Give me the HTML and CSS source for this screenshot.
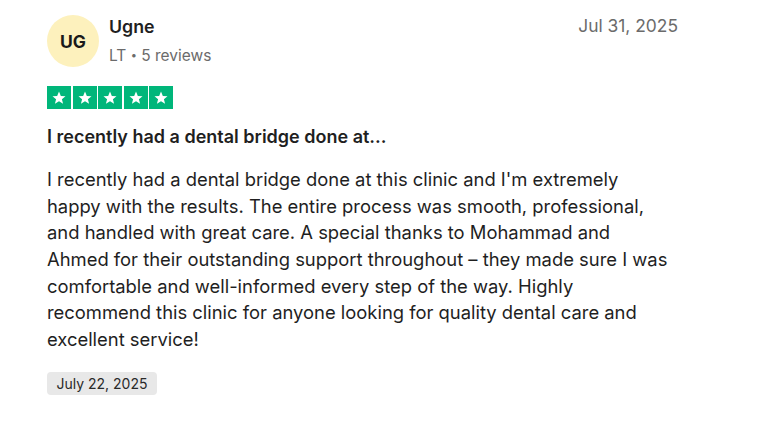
FILE: index.html
```html
<!DOCTYPE html>
<html>
<head>
<meta charset="utf-8">
<link rel="stylesheet" href="styles.css">
</head>
<body>
<article class="review">
  <header class="head">
    <div class="avatar">UG</div>
    <div class="who">
      <div class="name">Ugne</div>
      <div class="meta">LT <span class="dot">•</span> 5 reviews</div>
    </div>
    <time class="posted">Jul 31, 2025</time>
  </header>
  <div class="stars">
    <span class="star"><svg viewBox="0 0 24 24"><path d="M12 4.2l2.2 5.3 5.6.4-4.3 3.6 1.4 5.5L12 16l-4.9 3 1.4-5.5-4.3-3.6 5.6-.4z"/></svg></span>
    <span class="star"><svg viewBox="0 0 24 24"><path d="M12 4.2l2.2 5.3 5.6.4-4.3 3.6 1.4 5.5L12 16l-4.9 3 1.4-5.5-4.3-3.6 5.6-.4z"/></svg></span>
    <span class="star"><svg viewBox="0 0 24 24"><path d="M12 4.2l2.2 5.3 5.6.4-4.3 3.6 1.4 5.5L12 16l-4.9 3 1.4-5.5-4.3-3.6 5.6-.4z"/></svg></span>
    <span class="star"><svg viewBox="0 0 24 24"><path d="M12 4.2l2.2 5.3 5.6.4-4.3 3.6 1.4 5.5L12 16l-4.9 3 1.4-5.5-4.3-3.6 5.6-.4z"/></svg></span>
    <span class="star"><svg viewBox="0 0 24 24"><path d="M12 4.2l2.2 5.3 5.6.4-4.3 3.6 1.4 5.5L12 16l-4.9 3 1.4-5.5-4.3-3.6 5.6-.4z"/></svg></span>
  </div>
  <h2 class="title">I recently had a dental bridge done at...</h2>
  <p class="body">I recently had a dental bridge done at this clinic and I'm extremely happy with the results. The entire process was smooth, professional, and handled with great care. A special thanks to Mohammad and Ahmed for their outstanding support throughout – they made sure I was comfortable and well-informed every step of the way. Highly recommend this clinic for anyone looking for quality dental care and excellent service!</p>
  <div class="chip">July 22, 2025</div>
</article>
</body>
</html>
```

FILE: styles.css
```css
html, body {
  margin: 0;
  padding: 0;
  background: #ffffff;
}
body {
  font-family: Inter, "Open Sans", sans-serif;
  color: #1f1f1f;
}
.review {
  width: 631px;
  padding: 15px 0 0 47px;
}
.head {
  display: flex;
  align-items: flex-start;
}
.avatar {
  width: 52px;
  height: 52px;
  border-radius: 50%;
  background: #fdf1bd;
  display: flex;
  align-items: center;
  justify-content: center;
  font-size: 17.5px;
  font-weight: 700;
  color: #1a1a1a;
  flex: none;
}
.who {
  margin-left: 10px;
  flex: 1;
}
.name {
  font-size: 17.8px;
  font-weight: 600;
  line-height: 22px;
  margin-top: 1px;
}
.meta {
  font-size: 15.5px;
  color: #6b6b6b;
  line-height: 20px;
  margin-top: 7px;
}
.dot {
  font-size: 11px;
  vertical-align: 2px;
}
.posted {
  font-size: 17.4px;
  color: #6b6b6b;
  line-height: 22px;
}
.stars {
  display: flex;
  gap: 1.5px;
  margin-top: 19px;
}
.star {
  width: 24px;
  height: 23px;
  background: #00b67a;
  display: flex;
  align-items: center;
  justify-content: center;
}
.star svg {
  width: 20px;
  height: 20px;
  fill: #ffffff;
}
.title {
  font-size: 18px;
  font-weight: 600;
  line-height: 22px;
  margin: 16.5px 0 0;
}
.body {
  width: 627px;
  font-size: 18.4px;
  line-height: 26.67px;
  margin: 18.5px 0 0;
}
.chip {
  display: inline-block;
  margin-top: 19px;
  background: #e8e8e8;
  border-radius: 4px;
  font-size: 14px;
  line-height: 23px;
  padding: 0 9.5px;
  color: #2a2a2a;
}
```
